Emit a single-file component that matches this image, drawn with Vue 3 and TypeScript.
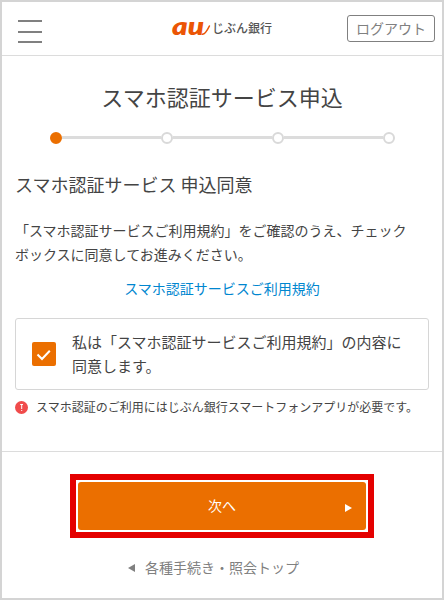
<script setup lang="ts">
import { ref } from 'vue'

const steps: number = 4
const currentStep = ref<number>(1)
const agreed = ref<boolean>(true)
</script>

<template>
  <div class="page">
    <header class="header">
      <button class="menu" type="button">
        <span class="bar"></span>
        <span class="bar middle"></span>
        <span class="bar"></span>
      </button>
      <div class="brand">
        <svg class="brand-mark" width="39" height="34" viewBox="0 0 39 34">
          <text x="0" y="23" textLength="32" lengthAdjust="spacingAndGlyphs">au</text>
          <path d="M30.2 22.2C33 22.6 35 19 37.4 14" />
        </svg>
        <span class="brand-name">じぶん銀行</span>
      </div>
      <button class="logout" type="button">ログアウト</button>
    </header>

    <main class="content">
      <h1 class="title">スマホ認証サービス申込</h1>
      <div class="stepper">
        <template v-for="n in steps" :key="n">
          <span v-if="n > 1" class="track"></span>
          <span class="dot" :class="{ active: n === currentStep }"></span>
        </template>
      </div>
      <h2 class="subtitle">スマホ認証サービス 申込同意</h2>
      <p class="lead">「スマホ認証サービスご利用規約」をご確認のうえ、チェック<br />ボックスに同意してお進みください。</p>
      <a class="terms">スマホ認証サービスご利用規約</a>
      <div class="agree" @click="agreed = !agreed">
        <span class="checkbox" :class="{ checked: agreed }">
          <svg v-if="agreed" width="24" height="24" viewBox="0 0 24 24">
            <path d="M5.5 12.5L10 17L17.8 8.7" />
          </svg>
        </span>
        <span class="agree-text">私は「スマホ認証サービスご利用規約」の内容に<br />同意します。</span>
      </div>
      <p class="note">
        <svg class="alert" width="13" height="13" viewBox="0 0 13 13">
          <circle cx="6.5" cy="6.5" r="6.5" />
          <path d="M5.2 3H8V4H7.2V8H6.2V4H5.2Z" />
          <rect x="6.2" y="9" width="1" height="1" />
        </svg>
        <span class="note-text">スマホ認証のご利用にはじぶん銀行スマートフォンアプリが必要です。</span>
      </p>
    </main>

    <footer class="footer">
      <div class="highlight">
        <button class="next" type="button">
          <span class="next-label">次へ</span>
          <svg class="next-arrow" width="7" height="8" viewBox="0 0 7 8">
            <path d="M0 0L7 4L0 8Z" />
          </svg>
        </button>
      </div>
      <a class="back">
        <svg width="7" height="8" viewBox="0 0 7 8">
          <path d="M7 0L0 4L7 8Z" />
        </svg>
        <span class="back-label">各種手続き・照会トップ</span>
      </a>
    </footer>
  </div>
</template>

<style>
body {
  margin: 0;
}
</style>

<style scoped>
.page {
  box-sizing: border-box;
  width: 444px;
  height: 600px;
  border: 2px solid #d4d4d4;
  background: #fff;
  color: #444;
  font-family: "Noto Sans CJK JP", sans-serif;
  overflow: hidden;
}
h1, h2, p {
  margin: 0;
  font-weight: 400;
}
button {
  margin: 0;
  padding: 0;
  border: 0;
  background: none;
  font-family: inherit;
}
svg {
  display: block;
  flex: none;
}
.header {
  box-sizing: border-box;
  height: 54px;
  border-bottom: 1px solid #dcdcdc;
  display: grid;
  grid-template-columns: 88px 1fr 88px;
  align-items: start;
  padding: 13px 7px 0 16px;
}
.menu {
  width: 24px;
  display: flex;
  flex-direction: column;
  padding-top: 5px;
  gap: 8px;
}
.bar {
  width: 24px;
  height: 2px;
  background: #808080;
}
.bar.middle {
  margin-top: 1px;
}
.bar:last-child {
  margin-top: 0;
}
.brand {
  display: flex;
  align-items: center;
  gap: 1px;
  height: 27px;
  padding: 0 0 0 66px;
}
.brand-mark {
  overflow: visible;
}
.brand-mark text {
  fill: #eb5505;
  font-family: Lato, sans-serif;
  font-size: 25px;
  font-weight: 800;
  font-style: italic;
}
.brand-mark path {
  fill: none;
  stroke: #eb5505;
  stroke-width: 1.6;
  stroke-linecap: round;
}
.brand-name {
  font-size: 12px;
  line-height: 16px;
  padding-bottom: 1px;
  font-weight: 500;
  color: #555;
  white-space: nowrap;
}
.logout {
  box-sizing: border-box;
  width: 88px;
  height: 27px;
  border: 1px solid #808080;
  border-radius: 3px;
  color: #808080;
  font-size: 14px;
  line-height: 25px;
}
.content {
  box-sizing: border-box;
  height: 395px;
  padding: 24px 13px 0;
}
.title {
  font-size: 22px;
  line-height: 32px;
  text-align: center;
}
.stepper {
  display: flex;
  align-items: center;
  margin: 20px 34px 0 35px;
}
.dot {
  box-sizing: border-box;
  width: 12px;
  height: 12px;
  border: 2px solid #d9d9d9;
  border-radius: 50%;
  background: #fff;
}
.dot.active {
  border-color: #eb6f00;
  background: #eb6f00;
}
.track {
  flex: 1;
  height: 3px;
  margin-bottom: 1px;
  background: #dcdcdc;
}
.subtitle {
  margin-top: 26px;
  font-size: 18px;
  line-height: 28px;
}
.lead {
  margin-top: 20px;
  font-size: 14px;
  line-height: 24px;
  white-space: nowrap;
}
.terms {
  display: block;
  margin: 10px 0 0;
  text-align: center;
  font-size: 14px;
  line-height: 24px;
  color: #0086cf;
}
.agree {
  box-sizing: border-box;
  width: 414px;
  height: 72px;
  margin-top: 18px;
  padding-left: 16px;
  border: 1px solid #d6d6d6;
  border-radius: 3px;
  display: flex;
  align-items: center;
  gap: 16px;
}
.checkbox {
  box-sizing: border-box;
  width: 24px;
  height: 24px;
  border-radius: 2px;
  border: 1px solid #d6d6d6;
}
.checkbox.checked {
  border: 0;
  background: #eb6f00;
}
.checkbox path {
  fill: none;
  stroke: #fff;
  stroke-width: 2;
}
.agree-text {
  font-size: 15px;
  line-height: 24px;
  white-space: nowrap;
}
.note {
  display: flex;
  align-items: center;
  gap: 8px;
  margin-top: 7px;
  font-size: 12px;
  line-height: 20px;
  white-space: nowrap;
}
.alert circle {
  fill: #f04b4b;
}
.alert path, .alert rect {
  fill: #fff;
}
.footer {
  border-top: 1px solid #dcdcdc;
  display: flex;
  flex-direction: column;
  align-items: center;
  padding-top: 22px;
}
.highlight {
  border: 6px solid #e40000;
  padding: 2px;
}
.next {
  width: 288px;
  height: 48px;
  border-radius: 3px;
  background: #eb6f00;
  color: #fff;
  display: grid;
  grid-template-columns: 21px 1fr 21px;
  align-items: center;
}
.next-label {
  grid-column: 2;
  padding-bottom: 2px;
  font-size: 14px;
  line-height: 20px;
}
.next-arrow {
  margin-top: 4px;
}
.next path {
  fill: #fff;
}
.back {
  display: flex;
  align-items: center;
  gap: 10px;
  margin: 17px 17px 0 0;
  font-size: 14px;
  line-height: 24px;
  color: #808080;
}
.back-label {
  padding-bottom: 2px;
}
.back path {
  fill: #808080;
}
</style>
